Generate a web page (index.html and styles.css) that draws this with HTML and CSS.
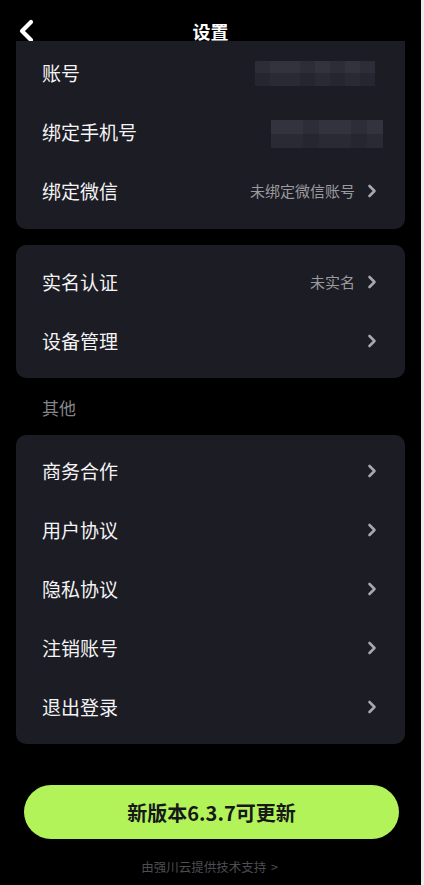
FILE: index.html
```html
<!DOCTYPE html>
<html lang="zh-CN">
<head>
    <meta charset="UTF-8">
    <meta name="viewport" content="width=device-width, initial-scale=1.0">
    <title>设置</title>
    <link rel="stylesheet" href="styles.css">
</head>
<body>

    <div class="screen">
        <header class="topbar">
            <span class="back">
                <svg width="16" height="24" viewBox="0 0 16 24"><polyline points="13,3 4,12 13,21" fill="none" stroke="#fff" stroke-width="4.2" stroke-linecap="round" stroke-linejoin="round"/></svg>
            </span>
            <h1>设置</h1>
        </header>

        <div class="card card-top">
            <div class="row">
                <span class="label">账号</span>
                <span class="mosaic mosaic-account">
                    <i></i><i class="l"></i><i class="l"></i><i></i><i class="l"></i><i></i><i class="l"></i><i></i>
                </span>
            </div>
            <div class="row">
                <span class="label">绑定手机号</span>
                <span class="mosaic mosaic-phone">
                    <i class="l"></i><i class="l"></i><i></i><i class="l"></i><i class="l"></i><i></i><i class="l"></i>
                </span>
            </div>
            <div class="row">
                <span class="label">绑定微信</span>
                <span class="value">未绑定微信账号</span>
                <span class="arrow"></span>
            </div>
        </div>

        <div class="card">
            <div class="row">
                <span class="label">实名认证</span>
                <span class="value">未实名</span>
                <span class="arrow"></span>
            </div>
            <div class="row">
                <span class="label">设备管理</span>
                <span class="arrow"></span>
            </div>
        </div>

        <div class="section-title">其他</div>

        <div class="card card-other">
            <div class="row"><span class="label">商务合作</span><span class="arrow"></span></div>
            <div class="row"><span class="label">用户协议</span><span class="arrow"></span></div>
            <div class="row"><span class="label">隐私协议</span><span class="arrow"></span></div>
            <div class="row"><span class="label">注销账号</span><span class="arrow"></span></div>
            <div class="row"><span class="label">退出登录</span><span class="arrow"></span></div>
        </div>

        <button class="update-btn">新版本6.3.7可更新</button>

        <div class="footer">由强川云提供技术支持 &gt;</div>
    </div>

</body>
</html>
```

FILE: styles.css
```css
body {
    margin: 0;
    background-color: #ececec;
    font-family: "Noto Sans CJK SC", "Noto Sans", sans-serif;
    color: #f2f2f2;
}

.screen {
    width: 421px;
    height: 885px;
    background-color: #000;
    overflow: hidden;
}

.topbar {
    height: 41px;
    display: flex;
    align-items: flex-end;
    justify-content: center;
    position: relative;
}

.topbar h1 {
    margin: 0 0 -2px;
    font-size: 18px;
    font-weight: 700;
    line-height: 24px;
    color: #fff;
}

.back {
    position: absolute;
    left: 18px;
    top: 19px;
    display: flex;
}

.card {
    margin: 16px 16px 0;
    background-color: #1c1c24;
    border-radius: 10px;
    padding: 7px 0 8px;
    position: relative;
}

.card-top {
    margin-top: 0;
    border-radius: 0 0 10px 10px;
    padding: 2px 0 9px;
}

.card-other {
    margin-top: 0;
    padding: 6px 0 8px;
}

.row {
    height: 59px;
    display: flex;
    align-items: center;
    padding: 0 28px 0 26px;
}

.label {
    flex: 1;
    font-size: 19px;
    font-weight: 400;
    color: #f4f4f4;
}

.value {
    font-size: 15px;
    color: #9a9a9e;
    margin-right: 12px;
}

.arrow {
    width: 10px;
    height: 14px;
    background: no-repeat center/10px 14px url("data:image/svg+xml,%3Csvg xmlns='http://www.w3.org/2000/svg' width='10' height='14' viewBox='0 0 10 14'%3E%3Cpolyline points='2.5,2 7.5,7 2.5,12' fill='none' stroke='%23a8a8ac' stroke-width='2.6' stroke-linecap='round' stroke-linejoin='round'/%3E%3C/svg%3E");
}

.mosaic {
    display: flex;
    height: 25px;
    filter: blur(0.6px);
}

.mosaic i {
    display: block;
    width: 15px;
    background: linear-gradient(#2d2d37 0 50%, #262630 50% 100%);
}

.mosaic i.l {
    background: linear-gradient(#33333d 0 50%, #2a2a34 50% 100%);
}

.mosaic-account {
    margin-right: 2px;
    margin-top: 2px;
}

.mosaic-phone {
    height: 28px;
    margin-top: 5px;
    margin-right: -6px;
}

.mosaic-phone i {
    width: 16px;
}

.section-title {
    padding: 17px 42px 14px;
    line-height: 26px;
    font-size: 17px;
    color: #85858a;
}

.update-btn {
    display: block;
    margin: 41px 0 0 24px;
    width: 375px;
    height: 54px;
    border: none;
    border-radius: 27px;
    background-color: #b3f35a;
    color: #16181a;
    font-family: "Noto Sans CJK SC", "Noto Sans", sans-serif;
    font-size: 20px;
    font-weight: 700;
    cursor: pointer;
}

.footer {
    margin-top: 19px;
    line-height: 18px;
    text-align: center;
    font-size: 12.5px;
    color: #4e4e52;
    padding-right: 2px;
    word-spacing: 2px;
}
```
